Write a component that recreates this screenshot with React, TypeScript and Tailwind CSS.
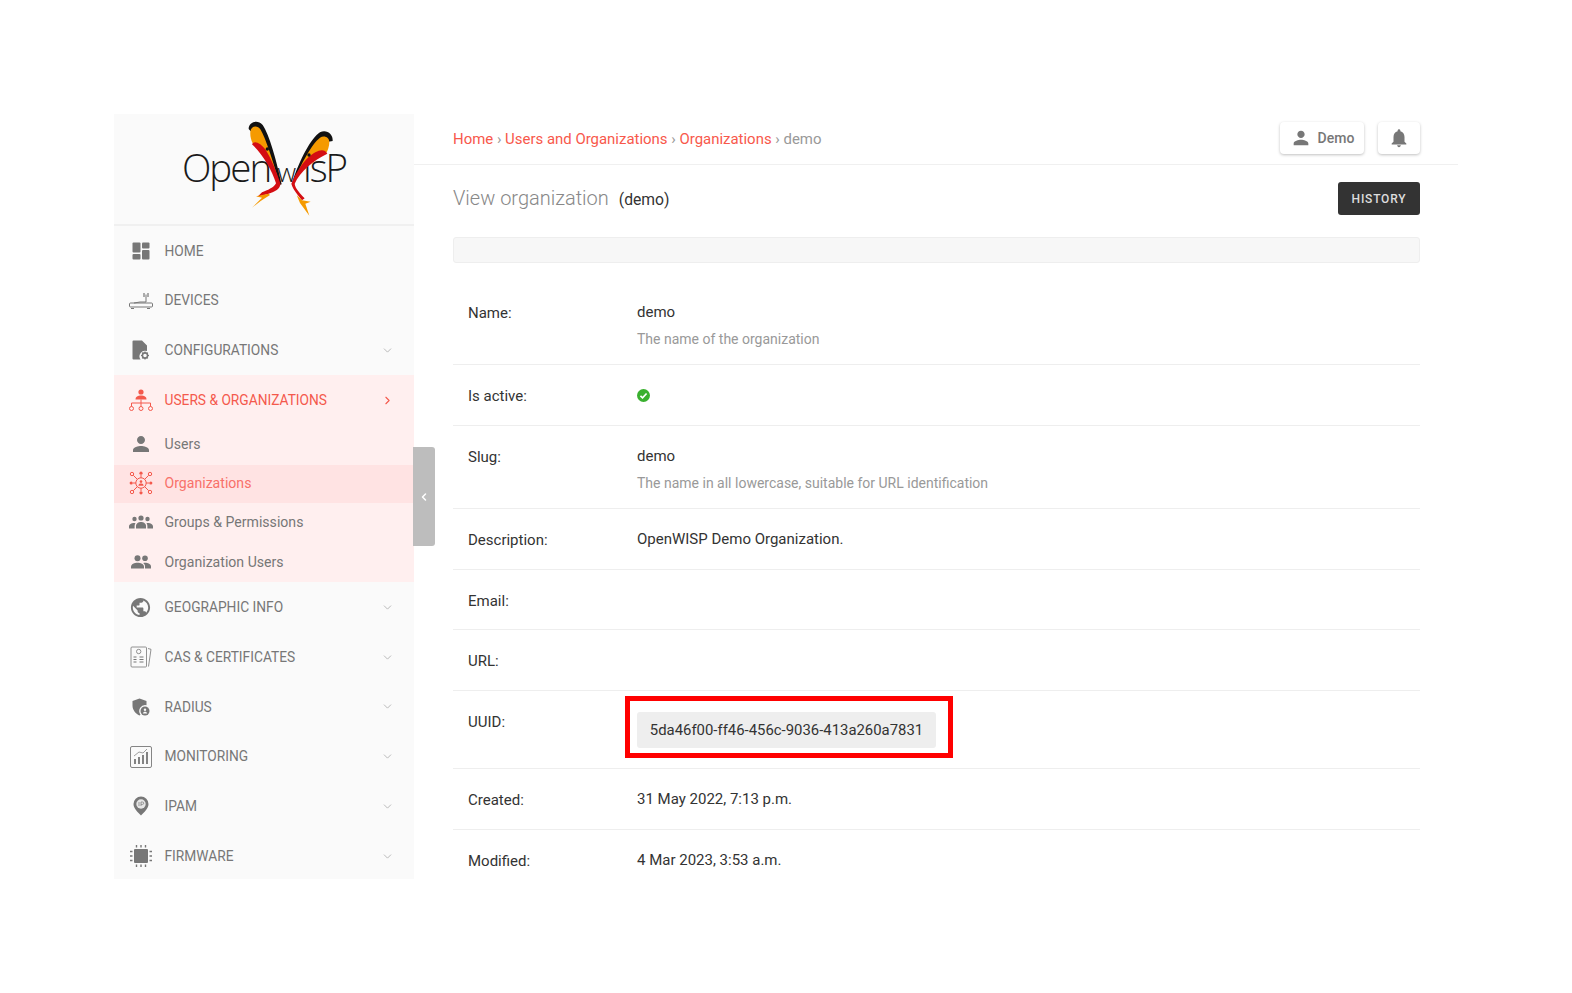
import type { ReactNode } from 'react'
import { ChevronDown, ChevronLeft, ChevronRight } from 'lucide-react'

const font = { fontFamily: 'Roboto, sans-serif' }

function Person({ className = '' }: { className?: string }) {
  return (
    <svg viewBox="0 0 24 24" className={className} fill="currentColor">
      <path d="M12 12c2.210 0 4-1.790 4-4s-1.790-4-4-4-4 1.790-4 4 1.790 4 4 4zm0 2c-2.670 0-8 1.340-8 4v2h16v-2c0-2.660-5.330-4-8-4z" />
    </svg>
  )
}

function HomeIcon() {
  return (
    <svg viewBox="0 0 18 18" className="h-[18px] w-[18px]" fill="#777">
      <rect x="0.5" y="0.5" width="8" height="10" rx="1" />
      <rect x="10" y="0.5" width="7.5" height="6" rx="1" />
      <rect x="0.5" y="12" width="8" height="5.5" rx="1" />
      <rect x="10" y="8" width="7.5" height="9.5" rx="1" />
    </svg>
  )
}

function DevicesIcon() {
  return (
    <svg viewBox="0 0 24 18" className="h-[18px] w-[24px]" fill="none" stroke="#777" strokeWidth="1">
      <rect x="0.5" y="11" width="23" height="4" rx="1" />
      <path d="M2 16.5h3M18 16.500h3M5 11l6-1h6M17 10V2.500" />
      <path d="M15 1v4M19 1v4" strokeWidth="1.2" />
    </svg>
  )
}

function ConfigIcon() {
  return (
    <svg viewBox="0 0 18 20" className="h-[20px] w-[18px]" fill="#777">
      <path d="M1.500 0.500h8.500l5 5v5.600a5.500 5.500 0 0 0-6.400 8.400H1.500a1 1 0 0 1-1-1v-17a1 1 0 0 1 1-1z" />
      <circle cx="13" cy="15.500" r="2.600" fill="none" stroke="#777" strokeWidth="1.600" />
      <path d="M13 11.500v1.200M13 18.300v1.200M9 15.500h1.200M15.800 15.500H17M10.200 12.700l.8.8M15 17.500l.8.8M15.800 12.700l-.8.8M11 17.500l-.8.8" stroke="#777" strokeWidth="1.200" />
    </svg>
  )
}

function TreeIcon() {
  return (
    <svg viewBox="0 0 24 22" className="h-[22px] w-[24px]" fill="none" stroke="#f4594c" strokeWidth="1">
      <circle cx="12" cy="3" r="2.600" fill="#f4594c" stroke="none" />
      <path d="M6.500 10.500c0-3 2.500-4 5.500-4s5.500 1 5.500 4z" fill="#f4594c" stroke="none" />
      <path d="M2.500 17.500v-3.500h19v3.500M12 10.500v7" />
      <circle cx="2.500" cy="19.500" r="2" />
      <circle cx="12" cy="19.500" r="2" />
      <circle cx="21.500" cy="19.500" r="2" />
    </svg>
  )
}

function OrgsIcon() {
  return (
    <svg viewBox="0 0 24 24" className="h-[24px] w-[24px]" fill="none" stroke="#f4594c" strokeWidth="1">
      <circle cx="12" cy="12" r="5.200" />
      <circle cx="12" cy="10.600" r="1.300" fill="#f4594c" stroke="none" />
      <path d="M9.400 14.800c0-1.600 1.200-2.200 2.600-2.200s2.600.6 2.600 2.200z" fill="#f4594c" stroke="none" />
      <circle cx="12" cy="2.200" r="1.600" fill="#f4594c" stroke="none" />
      <circle cx="12" cy="21.800" r="1.600" fill="#f4594c" stroke="none" />
      <circle cx="2.200" cy="12" r="1.600" fill="#f4594c" stroke="none" />
      <circle cx="21.800" cy="12" r="1.600" fill="#f4594c" stroke="none" />
      <circle cx="3" cy="3" r="1.700" />
      <circle cx="21" cy="3" r="1.700" />
      <circle cx="3" cy="21" r="1.700" />
      <circle cx="21" cy="21" r="1.700" />
      <path d="M12 4v3M12 17v3M4 12h3M17 12h3M4.300 4.300l4 4M19.700 4.300l-4 4M4.300 19.700l4-4M19.700 19.700l-4-4" />
    </svg>
  )
}

function GroupsIcon() {
  return (
    <svg viewBox="0 0 24 14" className="h-[14px] w-[24px]" fill="#777">
      <circle cx="12" cy="3" r="2.600" />
      <circle cx="5.500" cy="4" r="2.200" />
      <circle cx="18.500" cy="4" r="2.200" />
      <path d="M7 13.500v-2.500c0-2.500 2.500-4 5-4s5 1.500 5 4v2.500z" />
      <path d="M0 13.500v-2c0-2 2.500-3.500 5-3.500.6 0 1 .1 1.500.2-.6.8-.9 1.800-.9 2.800v2.500z" />
      <path d="M24 13.500v-2c0-2-2.500-3.500-5-3.500-.6 0-1 .1-1.500.2.600.8.900 1.800.900 2.800v2.500z" />
    </svg>
  )
}

function OrgUsersIcon() {
  return (
    <svg viewBox="0 0 20 14" className="h-[14px] w-[20px]" fill="#777">
      <circle cx="6.500" cy="3.300" r="3" />
      <circle cx="14" cy="3.300" r="2.800" />
      <path d="M0 13.500v-2c0-2.500 3.500-3.800 6.500-3.800s6.500 1.300 6.500 3.800v2z" />
      <path d="M14 13.500v-2.200c0-1.400-.7-2.500-1.800-3.300.6-.2 1.200-.3 1.800-.3 2.800 0 6 1.200 6 3.600v2.200z" />
    </svg>
  )
}

function GlobeIcon() {
  return (
    <svg viewBox="0 0 24 24" className="h-[23px] w-[23px]" fill="#777">
      <path d="M12 2C6.480 2 2 6.480 2 12s4.480 10 10 10 10-4.480 10-10S17.520 2 12 2zm-1 17.930c-3.950-.49-7-3.850-7-7.930 0-.62.08-1.210.21-1.790L9 15v1c0 1.100.9 2 2 2v1.930zm6.900-2.540c-.26-.81-1-1.390-1.900-1.390h-1v-3c0-.55-.45-1-1-1H8v-2h2c.55 0 1-.45 1-1V7h2c1.100 0 2-.9 2-2v-.41c2.930 1.190 5 4.060 5 7.410 0 2.080-.8 3.970-2.100 5.390z" />
    </svg>
  )
}

function CertIcon() {
  return (
    <svg viewBox="0 0 22 22" className="h-[22px] w-[22px]" fill="none" stroke="#777" strokeWidth="0.8">
      <rect x="1" y="1" width="15.500" height="20" rx="1" />
      <path d="M18 2.500l3 .8-2.500 17.200" />
      <circle cx="8.700" cy="5.500" r="2.200" />
      <path d="M3.500 11h3M3.500 13.500h3M3.500 16h3M9.500 11h4M9.500 13.500h4M9.500 16h4" strokeWidth="1.100" />
    </svg>
  )
}

function RadiusIcon() {
  return (
    <svg viewBox="0 0 18 18" className="h-[18px] w-[18px]" fill="#777">
      <path d="M7.500 0.500l7 2.500v4.200a6 6 0 0 0-6 9.500l-1 .8C3.500 15.500.5 12 .5 7.500V3z" />
      <circle cx="13" cy="13" r="4.500" />
      <circle cx="13" cy="11.700" r="1.200" fill="#fafafa" />
      <path d="M10.800 15.500c.3-1.300 1.200-1.800 2.200-1.800s1.900.5 2.200 1.800z" fill="#fafafa" />
    </svg>
  )
}

function MonitoringIcon() {
  return (
    <svg viewBox="0 0 22 22" className="h-[22px] w-[22px]" fill="none" stroke="#777">
      <rect x="0.500" y="0.500" width="21" height="21" rx="1.500" strokeWidth="0.900" />
      <path d="M5 18v-5M9 18v-7M13 18v-9M17 18V6" strokeWidth="1.800" />
      <path d="M4 10l5-4 4 1 4-4" strokeWidth="0.700" />
    </svg>
  )
}

function IpamIcon() {
  return (
    <svg viewBox="0 0 16 20" className="h-[20px] w-[16px]" fill="#777">
      <path d="M8 .5a7.500 7.500 0 0 1 7.500 7.500c0 4.500-4.500 8.500-7.500 11.500C5 16.500.5 12.500.5 8A7.500 7.500 0 0 1 8 .5z" />
      <circle cx="8" cy="8" r="4.700" fill="#e6e6e6" />
      <path d="M6 6v4M8 10V6h1.500a1.200 1.200 0 0 1 0 2.400H8" fill="none" stroke="#777" strokeWidth="0.700" />
    </svg>
  )
}

function FirmwareIcon() {
  return (
    <svg viewBox="0 0 22 22" className="h-[22px] w-[22px]" fill="#777">
      <rect x="4" y="4" width="14" height="14" rx="1" />
      <path d="M6.500 0v2.500M11 0v2.500M15.500 0v2.500M6.500 19.500V22M11 19.500V22M15.500 19.500V22M0 6.500h2.500M0 11h2.500M0 15.500h2.500M19.500 6.500H22M19.500 11H22M19.500 15.500H22" stroke="#777" strokeWidth="1.400" />
    </svg>
  )
}

function Logo() {
  return (
    <div className="relative flex h-[112px] items-start justify-center border-b-2 border-[#f0f0f0]">
      <p className="mt-[27px] flex items-baseline text-[#1a1a1a]" style={{ fontFamily: '"Open Sans", sans-serif' }}>
        <span className="text-[38.5px] leading-[52px] font-light tracking-[-2px]">Open</span>
        <span className="mx-[7px] text-[26px] leading-[52px] font-light">w</span>
        <span className="text-[38.5px] leading-[52px] font-light tracking-[-2px]">isP</span>
      </p>
      <svg viewBox="0 0 570 315" className="absolute top-[1px] left-[56px] h-[105px] w-[190px]">
        <path d="M236 42C236 22 262 12 278 30C298 60 318 130 335 208L328 210C312 160 290 100 262 70Z" fill="#111" />
        <path d="M488 78C490 56 468 42 450 52C424 68 388 135 366 205L372 208C392 155 420 115 450 85Z" fill="#111" />
        <path d="M241 50C244 32 262 30 272 44C288 72 306 130 327 200C310 160 282 105 248 85C243 75 240 62 241 50Z" fill="#f59a00" />
        <path d="M478 82C478 66 462 60 450 68C424 88 392 150 372 198C392 160 428 128 466 118C474 108 478 92 478 82Z" fill="#f59a00" />
        <path d="M246 88C252 74 272 84 287 104C303 130 318 165 331 205C333 222 312 232 296 236L262 246L276 232C292 226 312 218 318 205C306 165 276 115 246 88Z" fill="#d40d12" />
        <path d="M472 116C462 96 436 108 416 126C394 148 376 176 364 206C370 226 384 240 396 256L404 250C392 236 376 222 374 206C390 170 430 136 472 116Z" fill="#d40d12" />
        <path d="M296 236L258 244L276 248L246 278L272 258L300 240Z" fill="#f59a00" />
        <path d="M396 256L422 260L406 266L418 302L390 264L380 240Z" fill="#f59a00" />
        <circle cx="292" cy="102" r="5" fill="#111" />
        <circle cx="417" cy="120" r="5" fill="#111" />
      </svg>
    </div>
  )
}

type NavItem = { label: string; icon: ReactNode; chevron?: boolean }

const topItems: NavItem[] = [
  { label: 'HOME', icon: <HomeIcon /> },
  { label: 'DEVICES', icon: <DevicesIcon /> },
  { label: 'CONFIGURATIONS', icon: <ConfigIcon />, chevron: true },
]

const bottomItems: NavItem[] = [
  { label: 'GEOGRAPHIC INFO', icon: <GlobeIcon />, chevron: true },
  { label: 'CAS & CERTIFICATES', icon: <CertIcon />, chevron: true },
  { label: 'RADIUS', icon: <RadiusIcon />, chevron: true },
  { label: 'MONITORING', icon: <MonitoringIcon />, chevron: true },
  { label: 'IPAM', icon: <IpamIcon />, chevron: true },
  { label: 'FIRMWARE', icon: <FirmwareIcon />, chevron: true },
]

function NavRow({ item }: { item: NavItem }) {
  return (
    <div className="flex h-[49.8px] items-center text-[13.75px] text-[#777]">
      <span className="flex w-[50.500px] shrink-0 justify-center pl-[3px]">{item.icon}</span>
      <span>{item.label}</span>
      {item.chevron && <ChevronDown size={13} strokeWidth={1.5} className="mr-[20.500px] ml-auto text-[#aaa]" />}
    </div>
  )
}

function SubRow({ label, icon, active }: { label: string; icon: ReactNode; active?: boolean }) {
  return (
    <div className={`flex h-[38px] items-center text-[14.1px] ${active ? 'bg-[#ffe3e3] pb-[2px] text-[#f8716a]' : 'text-[#777]'}`}>
      <span className="flex w-[50.500px] shrink-0 justify-center pl-[3px]">{icon}</span>
      <span>{label}</span>
    </div>
  )
}

function Sidebar() {
  return (
    <aside className="relative w-[300px] shrink-0 bg-[#fafafa]">
      <Logo />
      <NavRow item={topItems[0]} />
      <NavRow item={topItems[1]} />
      <NavRow item={topItems[2]} />
      <div className="bg-[#ffefef]">
        <div className="flex h-[50px] items-center text-[13.75px] text-[#f4594c]">
          <span className="flex w-[50.500px] shrink-0 justify-center pl-[3px]">
            <TreeIcon />
          </span>
          <span>USERS &amp; ORGANIZATIONS</span>
          <ChevronRight size={13} strokeWidth={2} className="mr-[20.500px] ml-auto" />
        </div>
        <SubRow label="Users" icon={<Person className="h-[24px] w-[24px] text-[#777]" />} />
        <div className="mt-[2px]">
          <SubRow label="Organizations" active icon={<OrgsIcon />} />
        </div>
        <SubRow label="Groups & Permissions" icon={<GroupsIcon />} />
        <div className="mt-[2px] pb-[1px]">
          <SubRow label="Organization Users" icon={<OrgUsersIcon />} />
        </div>
      </div>
      {bottomItems.map((item) => (
        <NavRow key={item.label} item={item} />
      ))}
      <button className="absolute top-[333px] -right-[21px] flex h-[99px] w-[22px] items-center justify-center rounded-r-[3px] bg-[#bdbdbd] text-white">
        <ChevronLeft size={12} strokeWidth={3} />
      </button>
    </aside>
  )
}

function Row({ label, children, h, top = 0 }: { label: string; children?: ReactNode; h: string; top?: number }) {
  return (
    <div className={`flex border-b border-[#eee] pl-[15px] text-[15px] leading-[22px] ${h}`} style={{ paddingTop: top }}>
      <div className="w-[169px] shrink-0 text-[#333]">{label}</div>
      <div className="-mt-[1px] text-[#333]">{children}</div>
    </div>
  )
}

export default function App() {
  return (
    <div className="min-h-[993px] bg-white pt-[114px] pl-[114px]" style={font}>
      <div className="flex h-[765px] w-[1344px] overflow-hidden">
        <Sidebar />
        <main className="min-w-0 flex-1">
          <header className="flex h-[51px] items-center justify-between border-b border-[#f0f0f0] pr-[38px] pl-[39px]">
            <nav className="text-[14.95px] text-[#999]">
              <a className="text-[#f8584b]">Home</a> › <a className="text-[#f8584b]">Users and Organizations</a> ›{' '}
              <a className="text-[#f8584b]">Organizations</a> › demo
            </nav>
            <div className="-mt-[2px] flex items-center gap-[14px]">
              <button className="flex h-[32px] w-[84px] items-center justify-center gap-[6px] rounded-[4px] bg-white text-[14px] font-medium text-[#777] shadow-[0_1px_3px_rgba(0,0,0,0.25)]">
                <Person className="h-[22px] w-[22px]" />
                Demo
              </button>
              <button className="flex h-[32px] w-[42px] items-center justify-center rounded-[4px] bg-white text-[#777] shadow-[0_1px_3px_rgba(0,0,0,0.25)]">
                <svg viewBox="0 0 24 24" className="h-[22px] w-[22px]" fill="currentColor">
                  <path d="M12 22c1.100 0 2-.9 2-2h-4c0 1.100.89 2 2 2zm6-6v-5c0-3.070-1.640-5.640-4.500-6.320V4c0-.83-.67-1.500-1.500-1.500s-1.500.67-1.500 1.500v.68C7.630 5.360 6 7.920 6 11v5l-2 2v1h16v-1l-2-2z" />
                </svg>
              </button>
            </div>
          </header>
          <div className="pr-[38px] pl-[39px]">
            <div className="flex h-[72px] items-center justify-between pb-[5px]">
              <h1 className="-mt-[2px] flex items-baseline gap-[10px] text-[20px] font-light text-[#888]">
                View organization <span className="text-[15.7px] font-normal text-[#333]">(demo)</span>
              </h1>
              <button className="flex h-[33px] w-[82px] items-center justify-center rounded-[3px] bg-[#333] text-[12px] font-medium tracking-[0.8px] text-[#ddd]">
                HISTORY
              </button>
            </div>
            <div className="h-[26px] rounded-[3px] border border-[#eee] bg-[#f7f7f7]" />
            <div>
              <Row label="Name:" h="h-[102px]" top={39}>
                demo
                <p className="mt-[5px] text-[14px] text-[#999]">The name of the organization</p>
              </Row>
              <Row label="Is active:" h="h-[61px]" top={20}>
                <svg viewBox="0 0 14 14" className="mt-[5px] h-[13px] w-[13px]">
                  <circle cx="7" cy="7" r="7" fill="#3ab02f" />
                  <path d="M3.700 7.300l2.300 2.200 4.300-4.600" fill="none" stroke="#fff" strokeWidth="1.800" />
                </svg>
              </Row>
              <Row label="Slug:" h="h-[83px]" top={20}>
                demo
                <p className="mt-[5px] text-[14px] text-[#999]">The name in all lowercase, suitable for URL identification</p>
              </Row>
              <Row label="Description:" h="h-[61px]" top={20}>
                OpenWISP Demo Organization.
              </Row>
              <Row label="Email:" h="h-[60px]" top={20} />
              <Row label="URL:" h="h-[61px]" top={20} />
              <div className="flex h-[78px] border-b border-[#eee] pt-[5px] pl-[15px] text-[15px] text-[#333]">
                <div className="w-[157px] shrink-0 pt-[15px]">UUID:</div>
                <div className="h-[62px] w-[328px] border-[5px] border-[#f00] pt-[11px] pl-[7px]">
                  <span className="flex h-[36px] w-[299px] items-center justify-center rounded-[3px] bg-[#eee] text-[14.9px]">
                    5da46f00-ff46-456c-9036-413a260a7831
                  </span>
                </div>
              </div>
              <Row label="Created:" h="h-[61px]" top={20}>
                31 May 2022, 7:13 p.m.
              </Row>
              <Row label="Modified:" h="h-[61px]" top={20}>
                4 Mar 2023, 3:53 a.m.
              </Row>
            </div>
          </div>
        </main>
      </div>
    </div>
  )
}
